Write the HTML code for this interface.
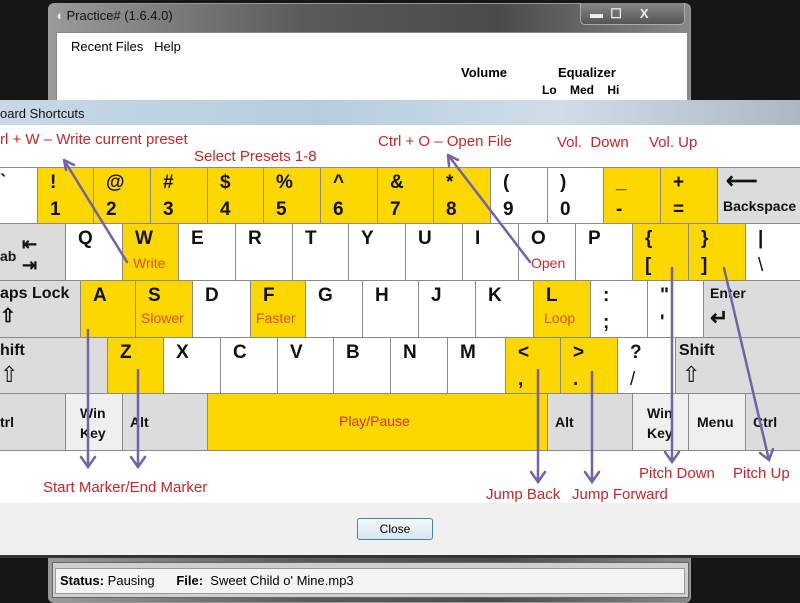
<!DOCTYPE html>
<html><head><meta charset="utf-8"><style>
*{margin:0;padding:0;box-sizing:border-box}
body{width:800px;height:600px;overflow:hidden;background:#161616;position:relative;font-family:"Liberation Sans",sans-serif}
.a{position:absolute}
.k{position:absolute;border:1px solid #8a8a8a;font-weight:bold;font-size:19px;color:#111}
.y{background:#fcd700}.w{background:#fff}.g{background:#dcdcdc}.l{background:#efefef}
.t1{position:absolute;left:12px;top:4px}
.t2{position:absolute;left:12px;top:31px}
.r{color:#c8262a;font-family:"Liberation Sans Narrow","Liberation Sans",sans-serif;font-size:15px;position:absolute;white-space:nowrap}
.s{color:#e05010;font-weight:normal;font-size:14px;position:absolute}
.m{font-size:14px;position:absolute}
</style></head><body>
<div class="a" style="left:48px;top:3px;width:643px;height:600px;border-radius:6px;background:linear-gradient(90deg,#9a9a9a,#5a5a5a 40%,#4a4a4a 70%,#888);border:1px solid #999"></div>
<div class="a" style="left:55px;top:8px;color:#111;font-size:13px"><span style="color:#eee">◖</span> Practice# (1.6.4.0)</div>
<div class="a" style="left:580px;top:3px;width:105px;height:22px;border:1px solid #aaa;border-top:none;border-radius:0 0 5px 5px;background:linear-gradient(#888,#555)"></div>
<div class="a" style="left:590px;top:6px;color:#eee;font-size:13px;font-weight:bold">▬ &nbsp;☐ &nbsp;&nbsp;&nbsp;&nbsp;X</div>
<div class="a" style="left:56px;top:32px;width:632px;height:70px;background:#fff;border:1px solid #888"></div>
<div class="a m" style="left:71px;top:39px;font-size:13px">Recent Files &nbsp;&nbsp;Help</div>
<div class="a" style="left:461px;top:65px;font-size:13px;font-weight:bold">Volume</div>
<div class="a" style="left:558px;top:65px;font-size:13px;font-weight:bold">Equalizer</div>
<div class="a" style="left:542px;top:83px;font-size:12px;font-weight:bold">Lo &nbsp;&nbsp;&nbsp;Med &nbsp;&nbsp;&nbsp;Hi</div>
<div class="a" style="left:52px;top:562px;width:637px;height:36px;background:#cfcfcf;border:1px solid #666"></div>
<div class="a" style="left:55px;top:568px;width:630px;height:26px;background:#f4f4f4;border:1px solid #999"></div>
<div class="a" style="left:60px;top:573px;font-size:13px"><b>Status:</b> Pausing &nbsp;&nbsp;&nbsp;&nbsp;&nbsp;<b>File:</b> &nbsp;Sweet Child o' Mine.mp3</div>
<div class="a" style="left:0;top:100px;width:800px;height:458px;background:#f0f0f0;border-bottom:3px solid #333"></div>
<div class="a" style="left:0;top:100px;width:800px;height:25px;background:linear-gradient(90deg,#c8d8e6,#b6cde0 40%,#d0dde8 70%,#aab8c4)"></div>
<div class="a" style="left:0;top:106px;font-size:13px;color:#111">oard Shortcuts</div>
<div class="a" style="left:0;top:125px;width:800px;height:378px;background:#fff"></div>
<div class="a" style="left:357px;top:518px;width:76px;height:22px;border:1px solid #3d8aa8;border-radius:3px;background:linear-gradient(#f4f8fb,#d8e6ee);font-size:12px;text-align:center;line-height:20px">Close</div>
<div class="a" style="left:0;top:167px;width:800px;height:283px;background:#fff"></div>
<div class="k w" style="left:-1px;top:167px;width:39px;height:57px"><span class="t1" style="left:0">`</span></div>
<div class="k y" style="left:37px;top:167px;width:57px;height:57px"><span class="t1">!</span><span class="t2">1</span></div>
<div class="k y" style="left:93px;top:167px;width:58px;height:57px"><span class="t1">@</span><span class="t2">2</span></div>
<div class="k y" style="left:150px;top:167px;width:58px;height:57px"><span class="t1">#</span><span class="t2">3</span></div>
<div class="k y" style="left:207px;top:167px;width:57px;height:57px"><span class="t1">$</span><span class="t2">4</span></div>
<div class="k y" style="left:263px;top:167px;width:58px;height:57px"><span class="t1">%</span><span class="t2">5</span></div>
<div class="k y" style="left:320px;top:167px;width:58px;height:57px"><span class="t1">^</span><span class="t2">6</span></div>
<div class="k y" style="left:377px;top:167px;width:57px;height:57px"><span class="t1">&amp;</span><span class="t2">7</span></div>
<div class="k y" style="left:433px;top:167px;width:58px;height:57px"><span class="t1">*</span><span class="t2">8</span></div>
<div class="k w" style="left:490px;top:167px;width:58px;height:57px"><span class="t1">(</span><span class="t2">9</span></div>
<div class="k w" style="left:547px;top:167px;width:57px;height:57px"><span class="t1">)</span><span class="t2">0</span></div>
<div class="k y" style="left:603px;top:167px;width:58px;height:57px"><span class="t1">_</span><span class="t2">-</span></div>
<div class="k y" style="left:660px;top:167px;width:58px;height:57px"><span class="t1">+</span><span class="t2">=</span></div>
<div class="k g" style="left:717px;top:167px;width:90px;height:57px"><span class="t1" style="left:8px;top:0;font-size:22px">⟵</span><span class="t2" style="left:5px;top:30px;font-size:14px">Backspace</span></div>
<div class="k g" style="left:-1px;top:223px;width:67px;height:58px"><span class="t1" style="left:0;top:24px;font-size:14px">ab</span><span class="a" style="left:22px;top:10px;font-size:18px">⇤<br>⇥</span></div>
<div class="k w" style="left:65px;top:223px;width:58px;height:58px"><span class="t1">Q</span></div>
<div class="k y" style="left:122px;top:223px;width:57px;height:58px"><span class="t1">W</span><span class="s" style="left:10px;top:31px">Write</span></div>
<div class="k w" style="left:178px;top:223px;width:58px;height:58px"><span class="t1">E</span></div>
<div class="k w" style="left:235px;top:223px;width:58px;height:58px"><span class="t1">R</span></div>
<div class="k w" style="left:292px;top:223px;width:57px;height:58px"><span class="t1">T</span></div>
<div class="k w" style="left:348px;top:223px;width:58px;height:58px"><span class="t1">Y</span></div>
<div class="k w" style="left:405px;top:223px;width:58px;height:58px"><span class="t1">U</span></div>
<div class="k w" style="left:462px;top:223px;width:57px;height:58px"><span class="t1">I</span></div>
<div class="k w" style="left:518px;top:223px;width:58px;height:58px"><span class="t1">O</span><span class="s" style="left:12px;top:31px;color:#d02828">Open</span></div>
<div class="k w" style="left:575px;top:223px;width:58px;height:58px"><span class="t1">P</span></div>
<div class="k y" style="left:632px;top:223px;width:57px;height:58px"><span class="t1">{</span><span class="t2">[</span></div>
<div class="k y" style="left:688px;top:223px;width:58px;height:58px"><span class="t1">}</span><span class="t2">]</span></div>
<div class="k w" style="left:745px;top:223px;width:60px;height:58px"><span class="t1">|</span><span class="t2" style="font-weight:normal">\</span></div>
<div class="k g" style="left:-1px;top:280px;width:82px;height:58px"><span class="t1" style="left:0;font-size:16px">aps Lock</span><span class="t2" style="left:0;top:24px">⇧</span></div>
<div class="k y" style="left:80px;top:280px;width:56px;height:58px"><span class="t1">A</span></div>
<div class="k y" style="left:135px;top:280px;width:58px;height:58px"><span class="t1">S</span><span class="s" style="left:5px;top:29px">Slower</span></div>
<div class="k w" style="left:192px;top:280px;width:59px;height:58px"><span class="t1">D</span></div>
<div class="k y" style="left:250px;top:280px;width:56px;height:58px"><span class="t1">F</span><span class="s" style="left:5px;top:29px">Faster</span></div>
<div class="k w" style="left:305px;top:280px;width:58px;height:58px"><span class="t1">G</span></div>
<div class="k w" style="left:362px;top:280px;width:57px;height:58px"><span class="t1">H</span></div>
<div class="k w" style="left:418px;top:280px;width:58px;height:58px"><span class="t1">J</span></div>
<div class="k w" style="left:475px;top:280px;width:59px;height:58px"><span class="t1">K</span></div>
<div class="k y" style="left:533px;top:280px;width:58px;height:58px"><span class="t1">L</span><span class="s" style="left:10px;top:29px">Loop</span></div>
<div class="k w" style="left:590px;top:280px;width:58px;height:58px"><span class="t1">:</span><span class="t2">;</span></div>
<div class="k w" style="left:647px;top:280px;width:57px;height:58px"><span class="t1">"</span><span class="t2">'</span></div>
<div class="k g" style="left:703px;top:280px;width:100px;height:58px"><span class="t1" style="left:6px;font-size:14px">Enter</span><span class="t2" style="left:6px;top:24px;font-size:22px">↵</span></div>
<div class="k g" style="left:-1px;top:337px;width:109px;height:57px"><span class="t1" style="left:0;font-size:16px">hift</span><span class="t2" style="left:0;top:24px;font-weight:normal;font-size:22px">⇧</span></div>
<div class="k y" style="left:107px;top:337px;width:57px;height:57px"><span class="t1">Z</span></div>
<div class="k w" style="left:163px;top:337px;width:58px;height:57px"><span class="t1">X</span></div>
<div class="k w" style="left:220px;top:337px;width:58px;height:57px"><span class="t1">C</span></div>
<div class="k w" style="left:277px;top:337px;width:57px;height:57px"><span class="t1">V</span></div>
<div class="k w" style="left:333px;top:337px;width:58px;height:57px"><span class="t1">B</span></div>
<div class="k w" style="left:390px;top:337px;width:58px;height:57px"><span class="t1">N</span></div>
<div class="k w" style="left:447px;top:337px;width:59px;height:57px"><span class="t1">M</span></div>
<div class="k y" style="left:505px;top:337px;width:56px;height:57px"><span class="t1">&lt;</span><span class="t2">,</span></div>
<div class="k y" style="left:560px;top:337px;width:58px;height:57px"><span class="t1">&gt;</span><span class="t2">.</span></div>
<div class="k w" style="left:617px;top:337px;width:59px;height:57px"><span class="t1">?</span><span class="t2" style="font-weight:normal">/</span></div>
<div class="k g" style="left:675px;top:337px;width:130px;height:57px"><span class="t1" style="left:3px;font-size:16px">Shift</span><span class="t2" style="left:6px;top:24px;font-weight:normal;font-size:22px">⇧</span></div>
<div class="k g" style="left:-1px;top:393px;width:67px;height:58px"><span class="t1" style="left:0;top:20px;font-size:14px">trl</span></div>
<div class="k l" style="left:65px;top:393px;width:58px;height:58px"><span class="t1" style="left:14px;top:9px;font-size:14px;line-height:20px">Win<br>Key</span></div>
<div class="k g" style="left:122px;top:393px;width:86px;height:58px"><span class="t1" style="left:7px;top:20px;font-size:14px">Alt</span></div>
<div class="k y" style="left:207px;top:393px;width:341px;height:58px"><span class="s" style="left:131px;top:19px;color:#d83010">Play/Pause</span></div>
<div class="k g" style="left:547px;top:393px;width:86px;height:58px"><span class="t1" style="left:7px;top:20px;font-size:14px">Alt</span></div>
<div class="k l" style="left:632px;top:393px;width:57px;height:58px"><span class="t1" style="left:14px;top:9px;font-size:14px;line-height:20px">Win<br>Key</span></div>
<div class="k l" style="left:688px;top:393px;width:58px;height:58px"><span class="t1" style="left:8px;top:20px;font-size:14px">Menu</span></div>
<div class="k g" style="left:745px;top:393px;width:60px;height:58px"><span class="t1" style="left:7px;top:20px;font-size:14px">Ctrl</span></div>
<div class="r" style="left:0;top:131px">rl + W – Write current preset</div>
<div class="r" style="left:194px;top:148px">Select Presets 1-8</div>
<div class="r" style="left:378px;top:133px">Ctrl + O – Open File</div>
<div class="r" style="left:557px;top:134px">Vol. &nbsp;Down</div>
<div class="r" style="left:649px;top:134px">Vol. Up</div>
<div class="r" style="left:43px;top:479px">Start Marker/End Marker</div>
<div class="r" style="left:486px;top:486px">Jump Back</div>
<div class="r" style="left:572px;top:486px">Jump Forward</div>
<div class="r" style="left:639px;top:465px">Pitch Down</div>
<div class="r" style="left:733px;top:465px">Pitch Up</div>
<svg class="a" style="left:0;top:0" width="800" height="600" stroke="#7462a8" stroke-width="2.5" fill="none" stroke-linecap="round">
<path d="M127 262L64 160M64 160l2 10M64 160l10 5"/>
<path d="M530 262L448 155M448 155l1 11M448 155l10 5"/>
<path d="M88 330V467M81 457l7 10 7-10"/>
<path d="M138 370V467M131 457l7 10 7-10"/>
<path d="M538 370V482M531 472l7 10 7-10"/>
<path d="M592 372V482M585 472l7 10 7-10"/>
<path d="M672 268V462M665 452l7 10 7-10"/>
<path d="M724 268L769 460M760 453l9 7 4-11"/>
</svg>
</body></html>
